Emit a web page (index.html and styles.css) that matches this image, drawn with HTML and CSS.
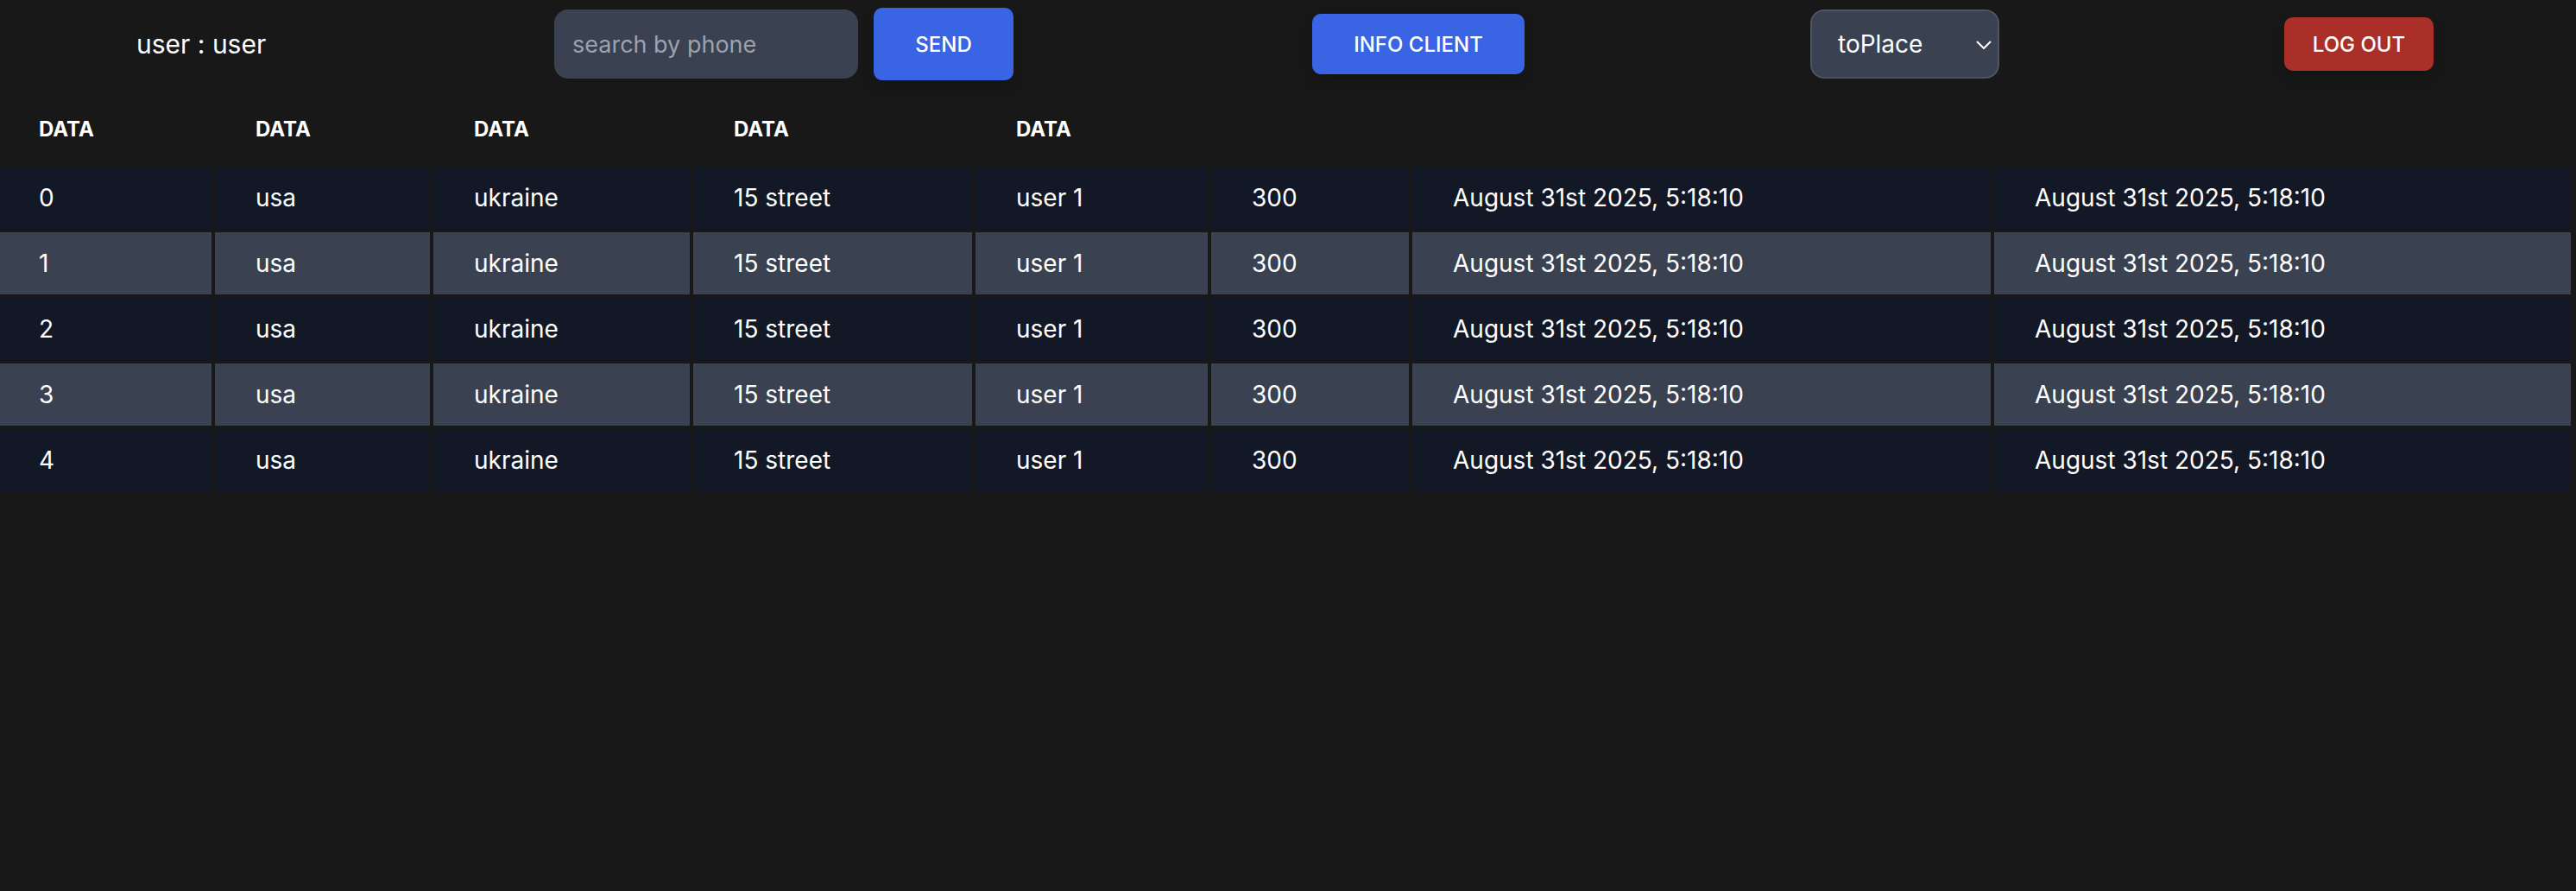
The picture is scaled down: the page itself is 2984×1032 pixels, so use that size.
FILE: index.html
```html
<!DOCTYPE html>
<html lang="en">
<head>
<meta charset="utf-8">
<title>Clients</title>
<link rel="stylesheet" href="styles.css">
</head>
<body>
<header class="topbar">
  <div class="user-label">user : user</div>
  <form class="search">
    <input class="search-input" type="text" placeholder="search by phone">
    <button class="btn btn-blue btn-send" type="button">SEND</button>
  </form>
  <button class="btn btn-blue btn-info" type="button">INFO CLIENT</button>
  <div class="select-wrap">
    <select class="place-select">
      <option>toPlace</option>
    </select>
    <svg class="chevron" width="18" height="10" viewBox="0 0 18 10"><path d="M1 1 L9 9 L17 1" fill="none" stroke="#fff" stroke-width="2"/></svg>
  </div>
  <button class="btn btn-red btn-logout" type="button">LOG OUT</button>
</header>

<div class="table-wrap">
<table class="data-table">
  <colgroup>
    <col class="w0"><col class="w1"><col class="w2"><col class="w3"><col class="w4"><col class="w5"><col class="w6"><col class="w7">
  </colgroup>
  <thead>
    <tr><th>DATA</th><th>DATA</th><th>DATA</th><th>DATA</th><th>DATA</th><th></th><th></th><th></th></tr>
  </thead>
  <tbody>
    <tr><td>0</td><td>usa</td><td>ukraine</td><td>15 street</td><td>user 1</td><td>300</td><td>August 31st 2025, 5:18:10</td><td>August 31st 2025, 5:18:10</td></tr>
    <tr><td>1</td><td>usa</td><td>ukraine</td><td>15 street</td><td>user 1</td><td>300</td><td>August 31st 2025, 5:18:10</td><td>August 31st 2025, 5:18:10</td></tr>
    <tr><td>2</td><td>usa</td><td>ukraine</td><td>15 street</td><td>user 1</td><td>300</td><td>August 31st 2025, 5:18:10</td><td>August 31st 2025, 5:18:10</td></tr>
    <tr><td>3</td><td>usa</td><td>ukraine</td><td>15 street</td><td>user 1</td><td>300</td><td>August 31st 2025, 5:18:10</td><td>August 31st 2025, 5:18:10</td></tr>
    <tr><td>4</td><td>usa</td><td>ukraine</td><td>15 street</td><td>user 1</td><td>300</td><td>August 31st 2025, 5:18:10</td><td>August 31st 2025, 5:18:10</td></tr>
  </tbody>
</table>
</div>
</body>
</html>
```
FILE: styles.css
```css
* { box-sizing: border-box; }

html, body {
  margin: 0;
  background: #181818;
  color: #ffffff;
  font-family: Inter, "Noto Sans", "Liberation Sans", sans-serif;
}

.topbar {
  height: 102px;
  display: flex;
  align-items: center;
  padding-left: 158px;
}

.user-label {
  width: 150px;
  font-size: 30px;
  line-height: 40px;
  white-space: nowrap;
}

.search {
  display: flex;
  align-items: center;
  gap: 18px;
  margin: 0 0 0 334px;
}

.search-input {
  width: 352px;
  height: 80px;
  border: none;
  border-radius: 16px;
  background: #3a4151;
  color: #fff;
  font-family: inherit;
  font-size: 27px;
  padding: 0 21px;
  outline: none;
}
.search-input::placeholder { color: #9ca3af; }

.btn {
  border: none;
  color: #fff;
  font-family: inherit;
  font-size: 24px;
  font-weight: 500;
  border-radius: 10px;
  cursor: pointer;
  box-shadow: 0 8px 16px rgba(0,0,0,0.18);
}
.btn-blue { background: #3964e3; }
.btn-red { background: #aa2f28; }

.btn-send { width: 162px; height: 84px; }
.btn-info { width: 246px; height: 70px; margin-left: 346px; }
.btn-logout { width: 173px; height: 62px; margin-left: 330px; }

.select-wrap {
  position: relative;
  display: flex;
  margin-left: 331px;
}
.place-select {
  appearance: none;
  -webkit-appearance: none;
  width: 219px;
  height: 80px;
  border: 2px solid #4b5563;
  border-radius: 16px;
  background: #3a4151;
  color: #fff;
  font-family: inherit;
  font-size: 28px;
  padding: 0 0 0 30px;
  outline: none;
}
.chevron {
  position: absolute;
  right: 9px;
  top: 36px;
  pointer-events: none;
}

.table-wrap {
  margin-left: -2px;
  margin-right: 4px;
}

.data-table {
  width: 100%;
  table-layout: fixed;
  border-collapse: separate;
  border-spacing: 0;
}

.w0 { width: 249px; }
.w1 { width: 253px; }
.w2 { width: 301px; }
.w3 { width: 327px; }
.w4 { width: 273px; }
.w5 { width: 233px; }
.w6 { width: 674px; }
.w7 { width: 672px; }

.data-table th {
  text-align: left;
  font-size: 24px;
  line-height: 32px;
  font-weight: 700;
  padding: 30px 47px 23px;
  border: 2px solid #181818;
}

.data-table th:first-child,
.data-table td:first-child { padding-left: 45px; }

.data-table td {
  font-size: 28px;
  line-height: 40px;
  padding: 16px 47px;
  border: 2px solid #181818;
  white-space: nowrap;
}

.data-table tbody tr:nth-child(odd) td { background: #121826; }
.data-table tbody tr:nth-child(even) td { background: #3a4151; }
```
